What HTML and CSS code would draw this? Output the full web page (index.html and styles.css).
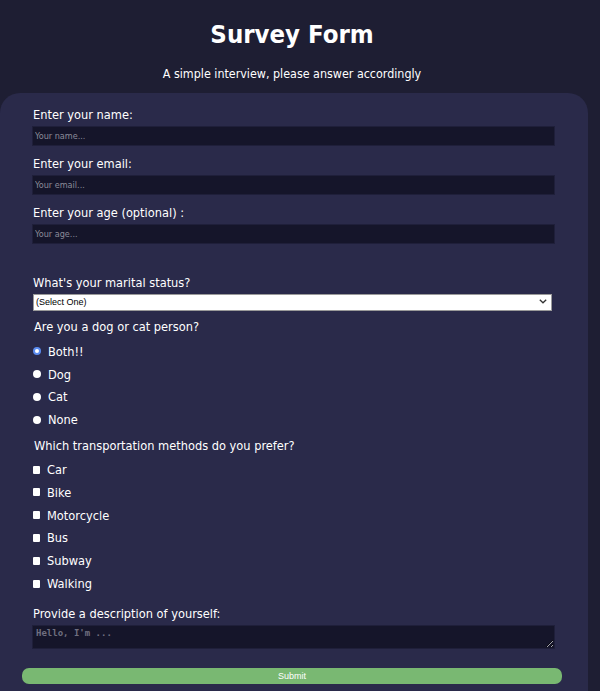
FILE: index.html
```html
<!DOCTYPE html>
<html lang="en">
<head>
<meta charset="utf-8">
<title>Survey Form</title>
<link rel="stylesheet" href="styles.css">
</head>
<body>
<header class="head">
  <h1 class="title">Survey Form</h1>
  <p class="subtitle">A simple interview, please answer accordingly</p>
</header>
<form class="card">
  <div class="group">
    <label class="label" for="name">Enter your name:</label>
    <input class="field" id="name" type="text" placeholder="Your name...">
  </div>
  <div class="group">
    <label class="label" for="email">Enter your email:</label>
    <input class="field" id="email" type="email" placeholder="Your email...">
  </div>
  <div class="group">
    <label class="label" for="age">Enter your age (optional) :</label>
    <input class="field" id="age" type="number" placeholder="Your age...">
  </div>

  <label class="label label-gap" for="status">What's your marital status?</label>
  <div class="select-wrap">
    <select class="select" id="status">
      <option>(Select One)</option>
      <option>Single</option>
      <option>Married</option>
    </select>
    <svg class="chev" width="8" height="5" viewBox="0 0 8 5" aria-hidden="true"><path d="M0.8 0.8 L4 3.8 L7.2 0.8" fill="none" stroke="#333" stroke-width="1.3"/></svg>
  </div>

  <p class="question">Are you a dog or cat person?</p>
  <div class="options">
    <label class="option"><input class="radio" type="radio" name="pet" checked><span>Both!!</span></label>
    <label class="option"><input class="radio" type="radio" name="pet"><span>Dog</span></label>
    <label class="option"><input class="radio" type="radio" name="pet"><span>Cat</span></label>
    <label class="option"><input class="radio" type="radio" name="pet"><span>None</span></label>
  </div>

  <p class="question q2">Which transportation methods do you prefer?</p>
  <div class="options">
    <label class="option"><input class="check" type="checkbox"><span>Car</span></label>
    <label class="option"><input class="check" type="checkbox"><span>Bike</span></label>
    <label class="option"><input class="check" type="checkbox"><span>Motorcycle</span></label>
    <label class="option"><input class="check" type="checkbox"><span>Bus</span></label>
    <label class="option"><input class="check" type="checkbox"><span>Subway</span></label>
    <label class="option"><input class="check" type="checkbox"><span>Walking</span></label>
  </div>

  <label class="label label-desc" for="desc">Provide a description of yourself:</label>
  <textarea class="area" id="desc" placeholder="Hello, I'm ..."></textarea>

  <button class="submit" type="submit">Submit</button>
</form>
</body>
</html>
```

FILE: styles.css
```css
* { box-sizing: border-box; }

html, body {
  margin: 0;
  padding: 0;
}

body {
  background: #1e1e33;
  color: #ffffff;
  font-family: "DejaVu Sans Condensed", "DejaVu Sans", sans-serif;
  font-size: 13px;
  overflow: hidden;
}

.head {
  width: 584px;
  text-align: center;
  padding-top: 16px;
}

.title {
  margin: 0;
  font-size: 25.5px;
  line-height: 36px;
  font-weight: bold;
}

.subtitle {
  margin: 14px 0 0;
  font-size: 12.4px;
  line-height: 16px;
}

.card {
  width: 588px;
  margin-top: 11px;
  background: #2a2a4a;
  border-radius: 20px 20px 0 0;
  padding: 14px 45px 20px 32px;
  display: flex;
  flex-direction: column;
  align-items: flex-start;
}

.group {
  display: flex;
  flex-direction: column;
  width: 100%;
  margin-bottom: 10px;
}

.label {
  display: block;
  line-height: 16px;
  margin-bottom: 3px;
  padding-left: 1px;
  font-size: 12.7px;
}

.field {
  width: 523px;
  height: 20px;
  background: #15152a;
  border: 1px solid #1f1f3a;
  color: #ffffff;
  font-family: "DejaVu Sans Condensed", sans-serif;
  font-size: 9px;
  padding: 0 2px;
  outline: none;
}

.field::placeholder { color: #8b8b99; }

.label-gap { margin-top: 21px; margin-bottom: 2px; }

.select-wrap {
  position: relative;
  margin-left: 1px;
  width: 519px;
  height: 17px;
}

.select {
  appearance: none;
  -webkit-appearance: none;
  width: 100%;
  height: 100%;
  font-family: "Liberation Sans", Arial, sans-serif;
  font-size: 9px;
  background: #ffffff;
  color: #000000;
  border: 1px solid #9a9a9a;
  border-radius: 0;
  padding: 0 2px;
  margin: 0;
}

.chev {
  position: absolute;
  right: 5px;
  top: 6px;
  pointer-events: none;
}

.question {
  margin: 9px 0 5px;
  padding-left: 2px;
  line-height: 16px;
  font-size: 12.7px;
}

.q2 { margin-top: 7px; margin-bottom: 4px; }

.options {
  display: flex;
  flex-direction: column;
}

.option {
  display: flex;
  align-items: center;
  height: 22.8px;
  gap: 7px;
  font-size: 12.7px;
}

.radio, .check {
  appearance: none;
  -webkit-appearance: none;
  margin: 0 0 0 1px;
  width: 8px;
  height: 8px;
  background: #ffffff;
  border: none;
}

.radio { border-radius: 50%; }

.radio:checked {
  background: #ffffff;
  border: 2px solid #5b8cf0;
}

.check { border-radius: 1px; width: 7px; height: 8px; }

.label-desc { margin-top: 11px; margin-bottom: 3px; }

.area {
  width: 523px;
  height: 24px;
  background: #15152a;
  border: 1px solid #1f1f3a;
  color: #ffffff;
  font-family: "DejaVu Sans Mono", monospace;
  font-size: 9px;
  font-weight: bold;
  padding: 2px 3px;
  resize: both;
  outline: none;
}

.area::placeholder { color: #6f6f80; }

.submit {
  margin: 19px 0 0 -10px;
  width: 540px;
  height: 16px;
  border: none;
  border-radius: 7px;
  background: #79b872;
  color: #ffffff;
  font-family: "Liberation Sans", Arial, sans-serif;
  font-size: 9px;
  padding: 0;
}
```
